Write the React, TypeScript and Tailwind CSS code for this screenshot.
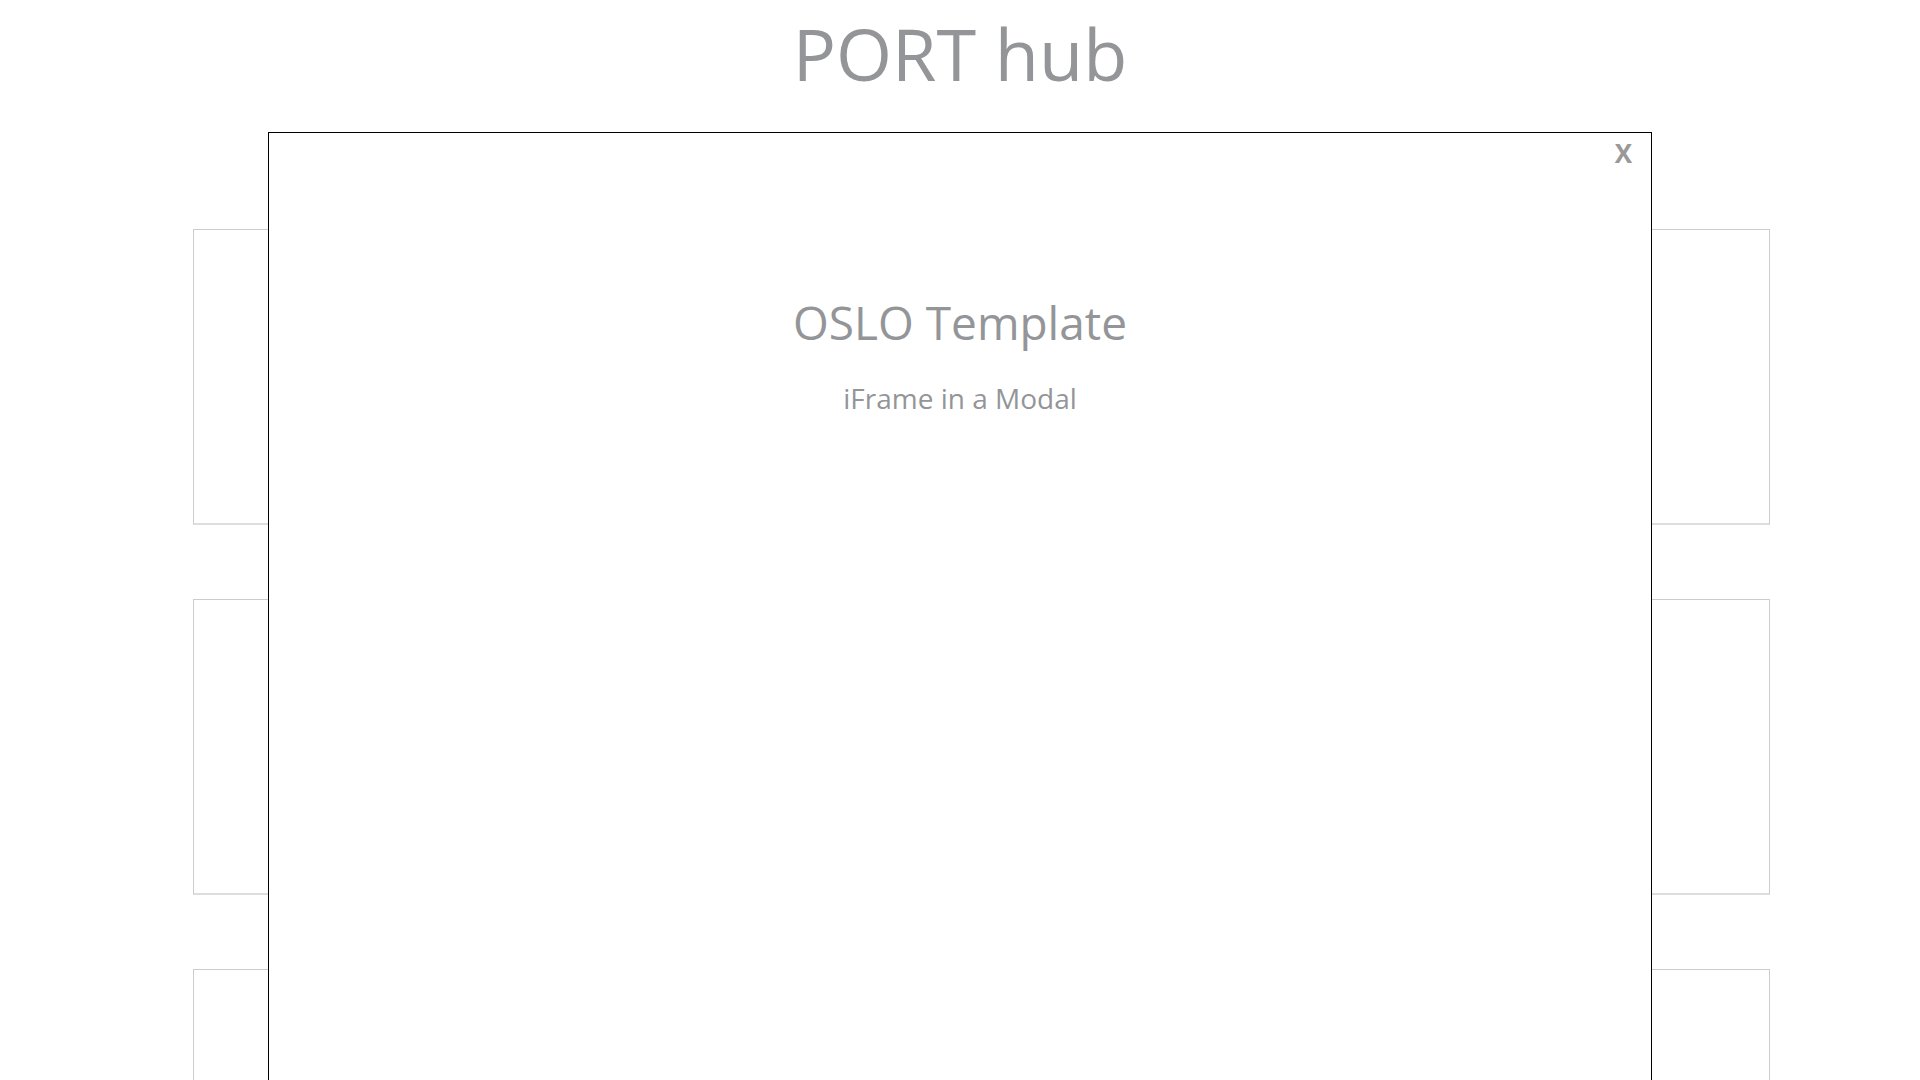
import React from "react";

export default function App() {
  const cards = Array.from({ length: 9 });
  return (
    <div className="relative min-h-screen bg-white overflow-hidden" style={{ fontFamily: '"Open Sans", "Noto Sans", sans-serif' }}>
      <header className="flex justify-center pt-[5px] h-[229px]">
        <h1 className="text-[72px] leading-[96px] font-normal text-[#939598]">PORT hub</h1>
      </header>
      <div className="grid grid-cols-3 gap-x-[40px] gap-y-[74px] pl-[193px] pr-[150px]">
        {cards.map((_, i) => (
          <div key={i} className="h-[296px] border border-[#cccccc] border-b-2 border-b-[#dddddd] bg-white" />
        ))}
      </div>
      <div className="absolute left-[268px] top-[132px] w-[1384px] h-[1000px] bg-white border border-black">
        <button className="absolute right-[19px] top-[7px] text-[26px] font-bold text-[#999999] leading-none">X</button>
        <div className="flex flex-col items-center pt-[159px]">
          <h2 className="text-[46px] leading-[60px] font-normal text-[#939598]">OSLO Template</h2>
          <p className="mt-[28px] text-[28px] leading-[36px] text-[#939598]">iFrame in a Modal</p>
        </div>
      </div>
    </div>
  );
}
